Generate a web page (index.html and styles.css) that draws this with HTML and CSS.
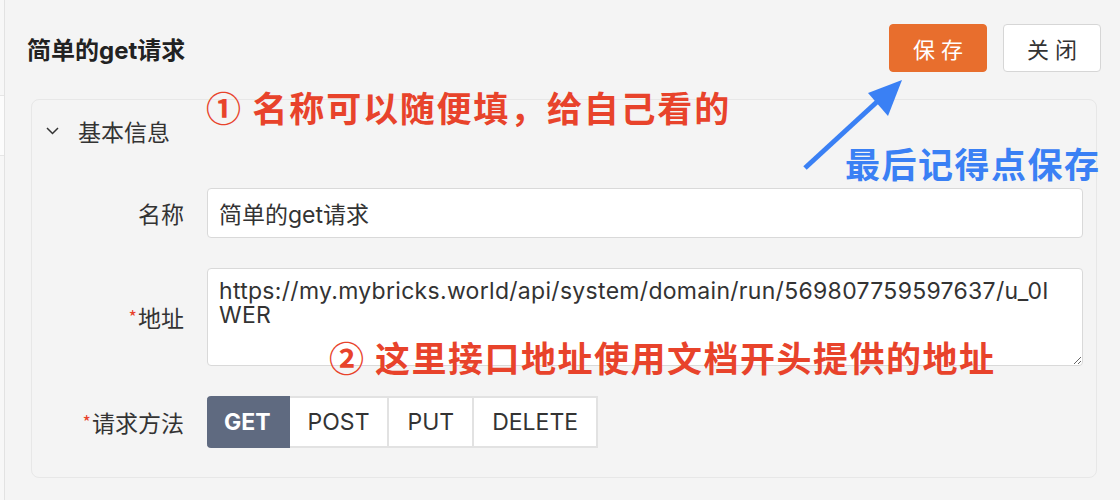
FILE: index.html
```html
<!DOCTYPE html>
<html lang="zh-CN">
<head>
<meta charset="utf-8">
<title>简单的get请求</title>
<link rel="stylesheet" href="styles.css">
</head>
<body>
<div class="page">
  <div class="side"><div class="side-tab"></div></div>
  <div class="main">
    <header class="header">
      <h1 class="title">简单的get请求</h1>
      <div class="actions">
        <button class="btn btn-primary">保存</button>
        <button class="btn btn-default">关闭</button>
      </div>
    </header>
    <section class="card">
      <div class="section-head">
        <svg class="chevron" width="13" height="8" viewBox="0 0 13 8"><path d="M1 1 L6.5 6.5 L12 1" fill="none" stroke="#333" stroke-width="1.5"/></svg>
        <span>基本信息</span>
      </div>
      <div class="form">
        <label class="label">名称</label>
        <input class="input" type="text" value="简单的get请求">
        <label class="label"><span class="req">*</span>地址</label>
        <textarea class="textarea">https://my.mybricks.world/api/system/domain/run/569807759597637/u_0IWER</textarea>
        <label class="label"><span class="req">*</span>请求方法</label>
        <div class="seg">
          <span class="seg-item active">GET</span>
          <span class="seg-item">POST</span>
          <span class="seg-item">PUT</span>
          <span class="seg-item">DELETE</span>
        </div>
      </div>
    </section>
  </div>
  <div class="note note-red note-1">① 名称可以随便填，给自己看的</div>
  <div class="note note-red note-2">② 这里接口地址使用文档开头提供的地址</div>
  <div class="note note-blue note-3">最后记得点保存</div>
  <svg class="arrow" width="120" height="110" viewBox="0 0 120 110">
    <line x1="14" y1="98" x2="88" y2="30" stroke="#3a80f4" stroke-width="5"/>
    <polygon points="111,10 77,23 97,46" fill="#3a80f4"/>
  </svg>
</div>
</body>
</html>
```

FILE: styles.css
```css
* { box-sizing: border-box; }
html, body { margin: 0; padding: 0; }
body {
  background: #f4f4f4;
  font-family: "Inter", "Noto Sans CJK SC", sans-serif;
  color: #333;
  width: 1120px;
  height: 500px;
  overflow: hidden;
}
.page {
  position: relative;
  display: flex;
  width: 1120px;
  height: 500px;
}
.side {
  width: 5px;
  flex: none;
  background: #f7f7f7;
  border-right: 1px solid #e2e2e2;
  padding-top: 95px;
}
.side-tab {
  height: 61px;
  background: #fcfcfc;
  border-top: 1px solid #e6e6e6;
  border-bottom: 1px solid #e6e6e6;
}
.main {
  flex: 1;
  display: flex;
  flex-direction: column;
}
.header {
  display: flex;
  align-items: center;
  justify-content: space-between;
  padding: 24px 19px 0 22px;
  height: 72px;
}
.title {
  margin: 0;
  font-size: 24px;
  font-weight: 700;
  color: #222;
  font-family: "Inter", "Noto Sans CJK SC", sans-serif;
}
.actions {
  display: flex;
  gap: 16px;
}
.btn {
  width: 98px;
  height: 48px;
  border-radius: 4px;
  font-size: 22px;
  letter-spacing: 6px;
  padding: 0 0 0 6px;
  font-family: "Noto Sans CJK SC", sans-serif;
  cursor: pointer;
}
.btn-primary {
  background: #e86e2d;
  border: 1px solid #e86e2d;
  color: #fff;
}
.btn-default {
  background: #fff;
  border: 1px solid #d6d6d6;
  color: #333;
}
.card {
  margin: 27px 23px 0 26px;
  height: 379px;
  border: 1px solid #e7e7e7;
  border-radius: 8px;
  padding-right: 13px;
}
.section-head {
  display: flex;
  align-items: center;
  height: 61px;
  padding-left: 14px;
  font-size: 23px;
  color: #333;
  font-family: "Noto Sans CJK SC", sans-serif;
}
.chevron { margin-right: 19px; }
.form {
  display: grid;
  grid-template-columns: 152px 1fr;
  column-gap: 23px;
  row-gap: 30px;
  align-items: center;
  margin-top: 27px;
}
.label {
  text-align: right;
  font-size: 23px;
  color: #333;
  font-family: "Noto Sans CJK SC", sans-serif;
}
.req { color: #e8402a; font-size: 18px; vertical-align: 3px; margin-right: 1px; }
.input, .textarea {
  width: 100%;
  border: 1px solid #d9d9d9;
  border-radius: 4px;
  background: #fff;
  font-family: "Inter", "Noto Sans CJK SC", sans-serif;
  font-size: 23px;
  color: #333;
  outline: none;
}
.input {
  height: 50px;
  padding: 0 11px;
}
.textarea {
  height: 98px;
  padding: 10px 14px 10px 11px;
  line-height: 24px;
  letter-spacing: 0.3px;
  resize: vertical;
  display: block;
  word-break: break-all;
}
.seg {
  display: flex;
  height: 52px;
}
.seg-item {
  display: flex;
  align-items: center;
  padding: 0 18px;
  background: #fff;
  border: 2px solid #e2e2e2;
  border-left: none;
  font-size: 23px;
  color: #333;
}
.seg-item.active {
  background: #5f6a80;
  border-color: #5f6a80;
  color: #fff;
  font-weight: 700;
  padding: 0 17px;
  border-radius: 4px 0 0 4px;
}
.seg-item:last-child { padding: 0 18px; }
.note {
  position: absolute;
  font-family: "Noto Sans CJK SC", sans-serif;
  font-weight: 700;
  font-size: 35px;
  line-height: 40px;
  white-space: nowrap;
  letter-spacing: 1.5px;
}
.note-red { color: #e8432b; }
.note-blue { color: #3a80f4; }
.note-1 { left: 206px; top: 87px; letter-spacing: 1.8px; }
.note-2 { left: 329px; top: 337px; }
.note-3 { left: 845px; top: 143px; }
.arrow {
  position: absolute;
  left: 791px;
  top: 70px;
}
```
